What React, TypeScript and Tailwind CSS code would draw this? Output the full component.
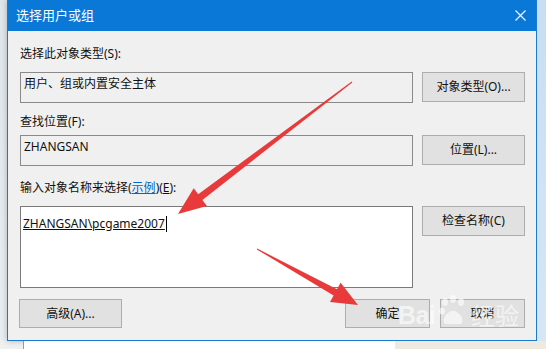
const ui = { fontFamily: '"Noto Sans", "Noto Sans CJK SC", sans-serif' };

function Btn({ label, w, h = "h-[30px]" }: { label: React.ReactNode; w: string; h?: string }) {
  return (
    <div
      className={`${w} ${h} shrink-0 flex items-center justify-center bg-[#e1e1e1] border border-[#adadad] text-[12px] text-[#111]`}
    >
      {label}
    </div>
  );
}

function Arrows() {
  return (
    <svg className="absolute inset-0 pointer-events-none" width="546" height="349" viewBox="0 0 546 349">
      <polygon
        fill="#e83a3a"
        points="351.7,81.6 198.2,194.3 193.7,188.3 178,214 206.9,205.9 202.4,199.9 352.3,82.4"
      />
      <polygon
        fill="#e83a3a"
        points="256.8,249.4 333.6,295.5 330,302 358,305 340.6,282.8 337,289.3 257.2,248.6"
      />
    </svg>
  );
}

function Watermark() {
  return (
    <div className="absolute left-[398px] top-[294px] flex items-end pointer-events-none opacity-60">
      <span
        className="text-[25px] font-bold leading-none tracking-tight text-white"
        style={{ fontFamily: '"Liberation Sans", sans-serif' }}
      >
        Bai
      </span>
      <svg width="34" height="34" viewBox="0 0 34 34" className="mx-[1px]">
        <g fill="#fff">
          <ellipse cx="9" cy="8" rx="3" ry="4" />
          <ellipse cx="17" cy="5" rx="3" ry="4" />
          <ellipse cx="25" cy="8" rx="3" ry="4" />
          <ellipse cx="6" cy="17" rx="3" ry="3.5" />
          <path d="M10 30 C6 30 7 22 12 19 C15 16 19 16 22 19 C27 22 28 30 24 30 Z" />
        </g>
      </svg>
      <span className="text-[24px] leading-none text-white">经验</span>
    </div>
  );
}

export default function App() {
  return (
    <div className="relative w-[546px] h-[349px] overflow-hidden bg-[#e4e9ee]" style={ui}>
      <div className="flex h-[341px]">
        <div className="w-[7px] shrink-0 bg-gradient-to-b from-[#dfe6ec] to-[#e9eef2]" />

        {/* dialog */}
        <div className="w-[530px] shrink-0 flex flex-col border border-[#1a7ad0] border-t-0 bg-[#f0f0f0] shadow-[0_0_6px_rgba(0,0,0,0.25)]">
          <div className="h-[31px] shrink-0 bg-[#0a78d6] flex items-center justify-between pl-[8px] pr-[10px]">
            <span className="text-white text-[13px]">选择用户或组</span>
            <svg width="11" height="11" viewBox="0 0 11 11">
              <path d="M0.5 0.5 L10.5 10.5 M10.5 0.5 L0.5 10.5" stroke="#fff" strokeWidth="1.1" />
            </svg>
          </div>

          <div className="flex flex-col pl-[12px] pr-[11px] text-[12px] text-[#111]">
            <div className="mt-[15px] h-[16px] leading-[16px]">选择此对象类型(S):</div>
            <div className="mt-[10px] flex gap-[9px] items-start">
              <div className="w-[393px] h-[31px] border border-[#8a8a8a] px-[3px] pt-[3px] leading-[16px]">
                用户、组或内置安全主体
              </div>
              <Btn label="对象类型(O)..." w="w-[103px]" />
            </div>

            <div className="mt-[11px] h-[16px] leading-[16px]">查找位置(F):</div>
            <div className="mt-[5px] flex gap-[9px] items-start">
              <div className="w-[393px] h-[31px] border border-[#8a8a8a] px-[3px] pt-[3px] leading-[16px]">
                ZHANGSAN
              </div>
              <Btn label="位置(L)..." w="w-[103px]" />
            </div>

            <div className="mt-[14px] h-[16px] leading-[16px]">
              输入对象名称来选择(
              <span className="text-[#0066cc] underline">示例</span>)(<span className="underline">E</span>):
            </div>
            <div className="mt-[10px] flex gap-[9px] items-start">
              <div className="w-[393px] h-[82px] border border-[#7a7a7a] bg-white px-[2px] pt-[9px] leading-[16px]">
                <span className="underline">ZHANGSAN\pcgame2007</span>
                <span className="inline-block w-[1px] h-[16px] bg-black align-top ml-[1px]" />
              </div>
              <Btn label="检查名称(C)" w="w-[103px]" />
            </div>

            <div className="mt-[11px] flex items-start">
              <Btn label="高级(A)..." w="w-[103px] -ml-[1px]" h="h-[29px]" />
              <div className="flex-1" />
              <div className="flex gap-[10px]">
                <Btn label="确定" w="w-[85px]" h="h-[29px]" />
                <Btn label="取消" w="w-[85px]" h="h-[29px]" />
              </div>
            </div>
          </div>
        </div>

        <div className="w-[9px] shrink-0 bg-gradient-to-b from-[#c9def2] to-[#d6e6f4]" />
      </div>

      {/* window behind the dialog */}
      <div className="h-[8px] flex bg-[#f0f0f0]">
        <div className="w-[23px] shrink-0" />
        <div className="w-[372px] bg-white border-l border-[#9a9a9a]" />
        <div className="flex-1 bg-[#eeeae0]" />
      </div>

      <Watermark />
      <Arrows />
    </div>
  );
}
